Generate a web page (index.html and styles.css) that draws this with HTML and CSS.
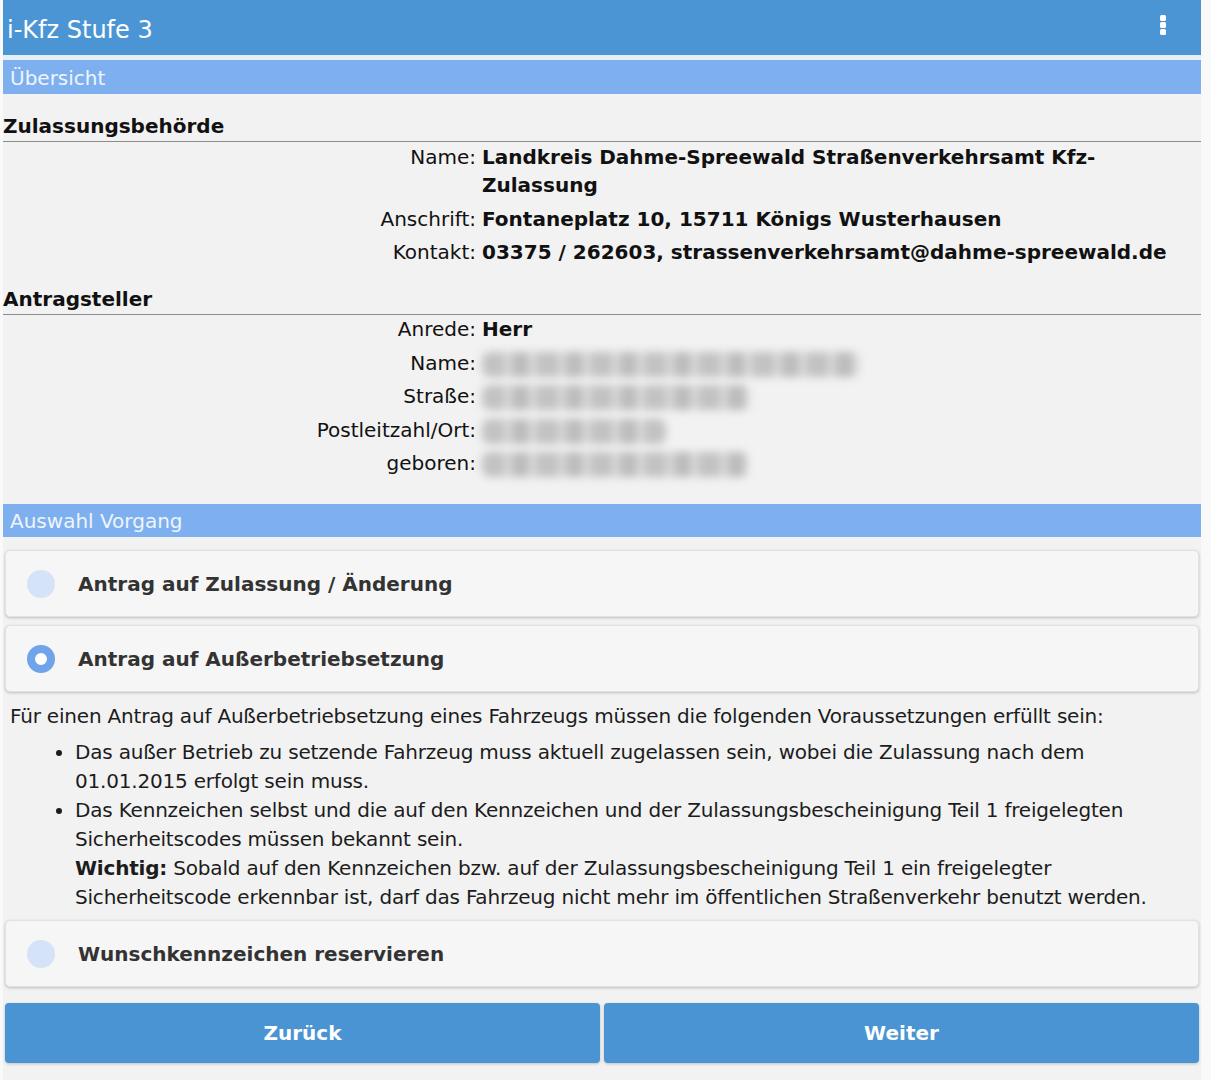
FILE: index.html
```html
<!DOCTYPE html>
<html lang="de">
<head>
<meta charset="utf-8">
<title>i-Kfz Stufe 3</title>
<link rel="stylesheet" href="styles.css">
</head>
<body>
<div class="app">
  <header class="topbar">
    <span class="topbar-title">i-Kfz Stufe 3</span>
    <button class="menu-btn" aria-label="Menü">
      <svg width="8" height="22" viewBox="0 0 8 22">
        <rect x="1" y="1" width="6" height="6" rx="1.5" fill="#fff"/>
        <rect x="1" y="8" width="6" height="6" rx="1.5" fill="#fff"/>
        <rect x="1" y="15" width="6" height="6" rx="1.5" fill="#fff"/>
      </svg>
    </button>
  </header>

  <div class="section-bar">Übersicht</div>

  <h2 class="group-title">Zulassungsbehörde</h2>
  <dl class="facts">
    <div class="fact"><dt>Name:</dt><dd>Landkreis Dahme-Spreewald Straßenverkehrsamt Kfz-Zulassung</dd></div>
    <div class="fact"><dt>Anschrift:</dt><dd>Fontaneplatz 10, 15711 Königs Wusterhausen</dd></div>
    <div class="fact"><dt>Kontakt:</dt><dd>03375 / 262603, strassenverkehrsamt@dahme-spreewald.de</dd></div>
  </dl>

  <h2 class="group-title group-title--next">Antragsteller</h2>
  <dl class="facts facts--person">
    <div class="fact"><dt>Anrede:</dt><dd>Herr</dd></div>
    <div class="fact"><dt>Name:</dt><dd><span class="redacted" style="width:378px"></span></dd></div>
    <div class="fact"><dt>Straße:</dt><dd><span class="redacted" style="width:268px"></span></dd></div>
    <div class="fact"><dt>Postleitzahl/Ort:</dt><dd><span class="redacted" style="width:184px"></span></dd></div>
    <div class="fact"><dt>geboren:</dt><dd><span class="redacted" style="width:266px"></span></dd></div>
  </dl>

  <div class="section-bar section-bar--choice">Auswahl Vorgang</div>

  <div class="choices">
    <label class="choice">
      <span class="radio"></span>
      <span class="choice-label">Antrag auf Zulassung / Änderung</span>
    </label>
    <label class="choice">
      <span class="radio radio--checked"></span>
      <span class="choice-label">Antrag auf Außerbetriebsetzung</span>
    </label>

    <div class="info">
      <p>Für einen Antrag auf Außerbetriebsetzung eines Fahrzeugs müssen die folgenden Voraussetzungen erfüllt sein:</p>
      <ul>
        <li>Das außer Betrieb zu setzende Fahrzeug muss aktuell zugelassen sein, wobei die Zulassung nach dem 01.01.2015 erfolgt sein muss.</li>
        <li>Das Kennzeichen selbst und die auf den Kennzeichen und der Zulassungsbescheinigung Teil 1 freigelegten Sicherheitscodes müssen bekannt sein.<br><strong class="note">Wichtig:</strong> Sobald auf den Kennzeichen bzw. auf der Zulassungsbescheinigung Teil 1 ein freigelegter Sicherheitscode erkennbar ist, darf das Fahrzeug nicht mehr im öffentlichen Straßenverkehr benutzt werden.</li>
      </ul>
    </div>

    <label class="choice">
      <span class="radio"></span>
      <span class="choice-label">Wunschkennzeichen reservieren</span>
    </label>
  </div>

  <div class="actions">
    <button class="btn">Zurück</button>
    <button class="btn">Weiter</button>
  </div>
</div>
</body>
</html>
```

FILE: styles.css
```css
html, body {
  margin: 0;
  padding: 0;
  background: #f9f9f9;
}

body {
  font-family: "DejaVu Sans", "Liberation Sans", sans-serif;
  color: #111;
}

.app {
  width: 1198px;
  margin-left: 3px;
  background: #f2f2f2;
  min-height: 1080px;
}

/* top application bar */
.topbar {
  height: 55px;
  background: #4b95d5;
  display: flex;
  align-items: center;
  justify-content: space-between;
  padding: 0 34px 0 4px;
  border-bottom: 5px solid #e7eef6;
}

.topbar-title {
  color: #fff;
  font-size: 24px;
  padding-top: 5px;
}

.menu-btn {
  background: none;
  border: 0;
  padding: 0;
  display: flex;
  margin-top: -6px;
}

/* light blue section bars */
.section-bar {
  height: 34px;
  line-height: 36px;
  background: #7eb0ef;
  color: #eef5fd;
  font-size: 20px;
  padding-left: 7px;
}

.section-bar--choice {
  margin-top: 27px;
  height: 33px;
  line-height: 34px;
}

/* group headings with rule */
.group-title {
  margin: 18px 0 0;
  font-size: 20px;
  line-height: 28px;
  font-weight: bold;
  border-bottom: 1px solid #8c8c8c;
  padding-bottom: 1px;
}

.group-title--next {
  margin-top: 19px;
}

/* label / value rows */
.facts {
  margin: 0;
  display: flex;
  flex-direction: column;
  gap: 5.5px;
  padding-top: 1px;
}

.facts--person {
  padding-top: 0;
}

.fact {
  display: grid;
  grid-template-columns: 473px 1fr;
  column-gap: 6px;
  font-size: 20px;
  line-height: 28px;
}

.fact dt {
  text-align: right;
}

.fact dd {
  margin: 0;
  font-weight: bold;
  padding-right: 20px;
}

.redacted {
  display: inline-block;
  height: 25px;
  vertical-align: middle;
  border-radius: 8px;
  background:
    repeating-linear-gradient(90deg, #c2c2c2 0 22px, #d8d8d8 22px 30px, #bcbcbc 30px 47px, #dcdcdc 47px 54px);
  filter: blur(4px);
}

/* selectable procedure cards */
.choices {
  padding: 13px 2px 0;
  display: flex;
  flex-direction: column;
  gap: 8px;
}

.choice {
  height: 65px;
  display: flex;
  align-items: center;
  background: #f6f6f6;
  border: 1px solid #e2e2e2;
  border-radius: 5px;
  box-shadow: 0 1px 3px rgba(0, 0, 0, 0.22);
  padding-left: 21px;
}

.radio {
  width: 28px;
  height: 28px;
  border-radius: 50%;
  background: #d5e3f8;
  flex: none;
  box-sizing: border-box;
}

.radio--checked {
  background: #fff;
  border: 8px solid #6fa4ea;
}

.choice-label {
  margin-left: 23px;
  font-size: 20px;
  font-weight: bold;
  color: #333;
  padding-top: 1px;
}

/* requirements text */
.info {
  font-size: 20px;
  line-height: 29px;
  color: #1c1c1c;
  padding: 2px 40px 0 5px;
  letter-spacing: -0.2px;
}

.info p {
  margin: 0 0 7px;
}

.info ul {
  margin: 0;
  padding-left: 65px;
}

.info li::marker {
  font-size: 20px;
}

.note {
  font-weight: bold;
}

/* footer buttons */
.actions {
  display: grid;
  grid-template-columns: 1fr 1fr;
  column-gap: 4px;
  padding: 16px 2px 0;
}

.btn {
  height: 60px;
  background: #4a94d4;
  border: 0;
  border-radius: 4px;
  box-shadow: 0 1px 3px rgba(0, 0, 0, 0.2);
  color: #fff;
  font-family: inherit;
  font-size: 20px;
  font-weight: bold;
}
```
